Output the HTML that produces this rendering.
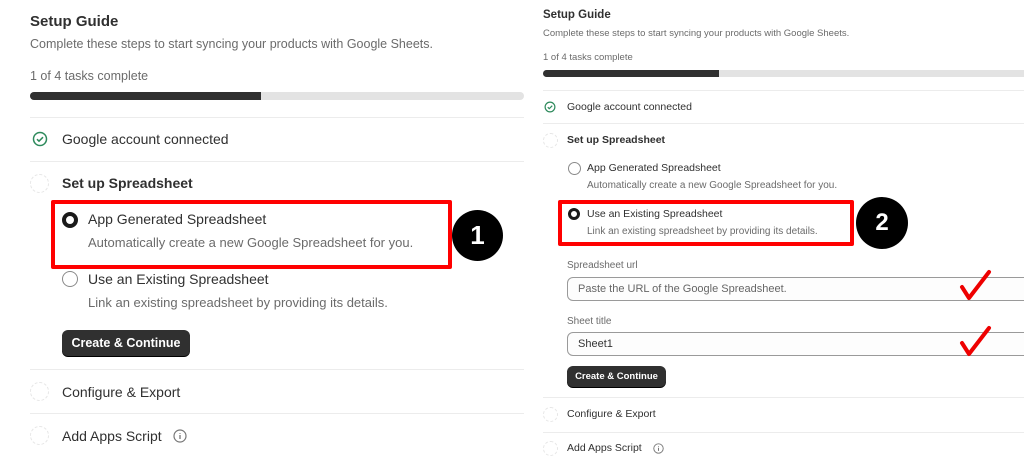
<!DOCTYPE html>
<html><head><style>
*{margin:0;padding:0;box-sizing:border-box}
body{width:1024px;height:470px;background:#fff;position:relative;overflow:hidden;font-family:"Liberation Sans",sans-serif;color:#303030}
.a{position:absolute;white-space:nowrap}
.hr{position:absolute;height:1px;background:#ececec}
.dash{position:absolute;border:1.5px dashed #e6e6e6;border-radius:50%}
.rad{position:absolute;border-radius:50%;border:1.5px solid #8a8a8a;background:#fff}
.radon{position:absolute;border-radius:50%;border:4px solid #1a1a1a;background:#fff}
.g{color:#6b6b6b}
.btn{position:absolute;background:#303030;color:#fff;font-weight:bold;border-radius:6px;box-shadow:0 1px 0 #000;text-align:center}
.red{position:absolute;border:4px solid #f00;border-radius:2px}
.num{position:absolute;background:#000;color:#fff;border-radius:50%;font-weight:bold;text-align:center}
.inp{position:absolute;border:1px solid #9a9a9a;border-radius:6px;background:#fdfdfd;font-size:11px;padding-left:10px}
</style></head><body>
<!-- LEFT -->
<div class="a" style="left:30px;top:13px;font-size:15px;font-weight:bold">Setup Guide</div>
<div class="a g" style="left:30px;top:37px;font-size:12.5px">Complete these steps to start syncing your products with Google Sheets.</div>
<div class="a g" style="left:30px;top:69px;font-size:12.5px">1 of 4 tasks complete</div>
<div style="position:absolute;left:30px;top:92px;width:494px;height:8px;background:#e3e3e3;border-radius:4px"></div>
<div style="position:absolute;left:30px;top:92px;width:231px;height:8px;background:#303030;border-radius:4px 0 0 4px"></div>
<div class="hr" style="left:30px;top:117px;width:494px"></div>
<svg class="a" style="left:32px;top:131px" width="16" height="16" viewBox="0 0 16 16"><circle cx="8" cy="8" r="6.5" fill="none" stroke="#2e8a5c" stroke-width="1.5"/><path d="M5 8.2l2 2 4-4" fill="none" stroke="#2e8a5c" stroke-width="1.5"/></svg>
<div class="a" style="left:62px;top:131px;font-size:14px">Google account connected</div>
<div class="hr" style="left:30px;top:161px;width:494px"></div>
<div class="dash" style="left:30px;top:174px;width:19px;height:19px"></div>
<div class="a" style="left:62px;top:175px;font-size:14px;font-weight:bold">Set up Spreadsheet</div>
<div class="red" style="left:51px;top:200px;width:401px;height:69px"></div>
<div class="radon" style="left:62px;top:212px;width:16px;height:16px"></div>
<div class="a" style="left:88px;top:211px;font-size:14px">App Generated Spreadsheet</div>
<div class="a g" style="left:88px;top:235px;font-size:13px">Automatically create a new Google Spreadsheet for you.</div>
<div class="num" style="left:452px;top:210px;width:51px;height:51px;font-size:26px;line-height:51px">1</div>
<div class="rad" style="left:62px;top:271px;width:16px;height:16px"></div>
<div class="a" style="left:88px;top:271px;font-size:14px">Use an Existing Spreadsheet</div>
<div class="a g" style="left:88px;top:295px;font-size:13px">Link an existing spreadsheet by providing its details.</div>
<div class="btn" style="left:62px;top:330px;width:128px;height:26px;font-size:12.5px;line-height:26px">Create &amp; Continue</div>
<div class="hr" style="left:30px;top:369px;width:494px"></div>
<div class="dash" style="left:30px;top:382px;width:19px;height:19px"></div>
<div class="a" style="left:62px;top:384px;font-size:14px">Configure &amp; Export</div>
<div class="hr" style="left:30px;top:413px;width:494px"></div>
<div class="dash" style="left:30px;top:426px;width:19px;height:19px"></div>
<div class="a" style="left:62px;top:428px;font-size:14px">Add Apps Script</div>
<svg class="a" style="left:173px;top:429px" width="14" height="14" viewBox="0 0 14 14"><circle cx="7" cy="7" r="6" fill="none" stroke="#777" stroke-width="1.2"/><path d="M7 6v4M7 4v.8" stroke="#777" stroke-width="1.3"/></svg>
<!-- RIGHT -->
<div style="position:absolute;left:524px;top:0;width:500px;height:470px;background:#fff"></div>
<div class="a" style="left:543px;top:9px;font-size:11.5px;font-weight:bold">Setup Guide</div>
<div class="a g" style="left:543px;top:28px;font-size:9.5px">Complete these steps to start syncing your products with Google Sheets.</div>
<div class="a g" style="left:543px;top:52px;font-size:9.5px">1 of 4 tasks complete</div>
<div style="position:absolute;left:543px;top:70px;width:481px;height:7px;background:#e3e3e3;border-radius:4px 0 0 4px"></div>
<div style="position:absolute;left:543px;top:70px;width:176px;height:7px;background:#303030;border-radius:4px 0 0 4px"></div>
<div class="hr" style="left:543px;top:90px;width:481px"></div>
<svg class="a" style="left:544px;top:101px" width="12" height="12" viewBox="0 0 16 16"><circle cx="8" cy="8" r="6.5" fill="none" stroke="#2e8a5c" stroke-width="1.6"/><path d="M5 8.2l2 2 4-4" fill="none" stroke="#2e8a5c" stroke-width="1.6"/></svg>
<div class="a" style="left:567px;top:101px;font-size:10.5px">Google account connected</div>
<div class="hr" style="left:543px;top:123px;width:481px"></div>
<div class="dash" style="left:543px;top:133px;width:15px;height:15px"></div>
<div class="a" style="left:567px;top:134px;font-size:10.5px;font-weight:bold">Set up Spreadsheet</div>
<div class="rad" style="left:568px;top:162px;width:13px;height:13px"></div>
<div class="a" style="left:587px;top:162px;font-size:10.5px">App Generated Spreadsheet</div>
<div class="a g" style="left:587px;top:180px;font-size:10px">Automatically create a new Google Spreadsheet for you.</div>
<div class="red" style="left:558px;top:200px;width:296px;height:46px"></div>
<div class="radon" style="left:568px;top:208px;width:12px;height:12px;border-width:3px"></div>
<div class="a" style="left:587px;top:208px;font-size:10.5px">Use an Existing Spreadsheet</div>
<div class="a g" style="left:587px;top:226px;font-size:10px">Link an existing spreadsheet by providing its details.</div>
<div class="num" style="left:856px;top:197px;width:52px;height:52px;font-size:24px;line-height:52px">2</div>
<div class="a g" style="left:567px;top:260px;font-size:10px">Spreadsheet url</div>
<div class="inp" style="left:567px;top:277px;width:470px;height:24px;line-height:22px;color:#666">Paste the URL of the Google Spreadsheet.</div>
<div class="a g" style="left:567px;top:316px;font-size:10px">Sheet title</div>
<div class="inp" style="left:567px;top:332px;width:470px;height:24px;line-height:22px;color:#333">Sheet1</div>
<svg class="a" style="left:958px;top:268px" width="36" height="36" viewBox="0 0 36 36"><path d="M4 19 L11 30 L31 4" fill="none" stroke="#e00" stroke-width="4" stroke-linecap="round" stroke-linejoin="round"/></svg>
<svg class="a" style="left:958px;top:324px" width="36" height="36" viewBox="0 0 36 36"><path d="M4 19 L11 30 L31 4" fill="none" stroke="#e00" stroke-width="4" stroke-linecap="round" stroke-linejoin="round"/></svg>
<div class="btn" style="left:567px;top:366px;width:99px;height:21px;font-size:9.5px;line-height:21px">Create &amp; Continue</div>
<div class="hr" style="left:543px;top:397px;width:481px"></div>
<div class="dash" style="left:543px;top:407px;width:15px;height:15px"></div>
<div class="a" style="left:567px;top:408px;font-size:10.5px">Configure &amp; Export</div>
<div class="hr" style="left:543px;top:432px;width:481px"></div>
<div class="dash" style="left:543px;top:441px;width:15px;height:15px"></div>
<div class="a" style="left:567px;top:442px;font-size:10.5px">Add Apps Script</div>
<svg class="a" style="left:653px;top:443px" width="11" height="11" viewBox="0 0 14 14"><circle cx="7" cy="7" r="6" fill="none" stroke="#777" stroke-width="1.2"/><path d="M7 6v4M7 4v.8" stroke="#777" stroke-width="1.3"/></svg>
</body></html>
